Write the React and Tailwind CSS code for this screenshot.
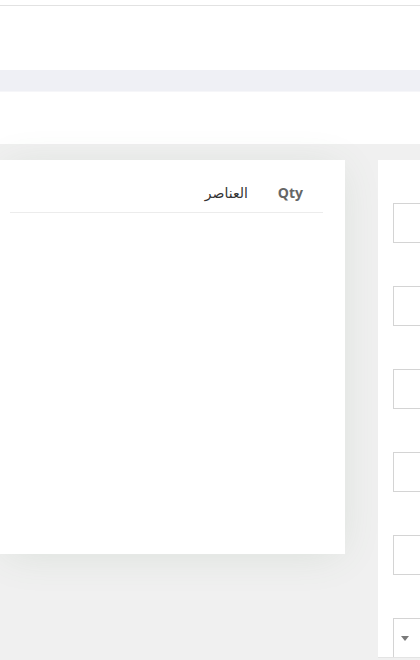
import React from "react";

const fields = ["", "", "", "", ""];

export default function App() {
  return (
    <div
      className="w-[420px] h-[660px] overflow-hidden bg-[#f0f0f0]"
      style={{ fontFamily: '"Open Sans", "DejaVu Sans", sans-serif' }}
    >
      {/* top bar */}
      <div className="h-[70px] bg-white pt-[5px]">
        <div className="border-t border-[#e2e2e2]" />
      </div>
      <div className="h-[21px] bg-[#eff0f5]" />
      <div className="h-[53px] bg-white border-t border-[#f6f6f9]" />

      {/* content */}
      <div className="mr-[-258px] pt-[16px]" dir="rtl">
        <div className="flex items-start gap-[33px]">
          {/* side panel */}
          <div className="w-[300px] h-[498px] shrink-0 bg-white border-b border-[#e4e4e4] overflow-hidden pt-[43px] pl-[15px] pr-[15px]">
            <div className="flex flex-col gap-[43px]">
              {fields.map((f, i) => (
                <input
                  key={i}
                  type="text"
                  defaultValue={f}
                  className="h-[40px] w-full border border-[#d4d4d4] bg-white outline-none"
                />
              ))}
              <div className="h-[40px] w-full border border-[#d4d4d4] bg-white flex items-center justify-end pl-[7px]">
                <svg width="8" height="5" viewBox="0 0 8 5">
                  <path d="M0 0 H8 L4 5 Z" fill="#7a7a7a" />
                </svg>
              </div>
            </div>
          </div>

          {/* items card */}
          <div className="flex-1 h-[394px] bg-white shadow-[0_4px_40px_-6px_rgba(80,120,80,0.14)] pt-[23px] pr-[22px] pl-[10px]">
            <div className="flex items-center gap-[30px] pr-[20px] pb-[9px] border-b border-[#ececec] leading-5">
              <span className="text-[14px] font-bold text-[#666]">Qty</span>
              <span className="text-[14px] text-[#333]">العناصر</span>
            </div>
          </div>
        </div>
      </div>
    </div>
  );
}
